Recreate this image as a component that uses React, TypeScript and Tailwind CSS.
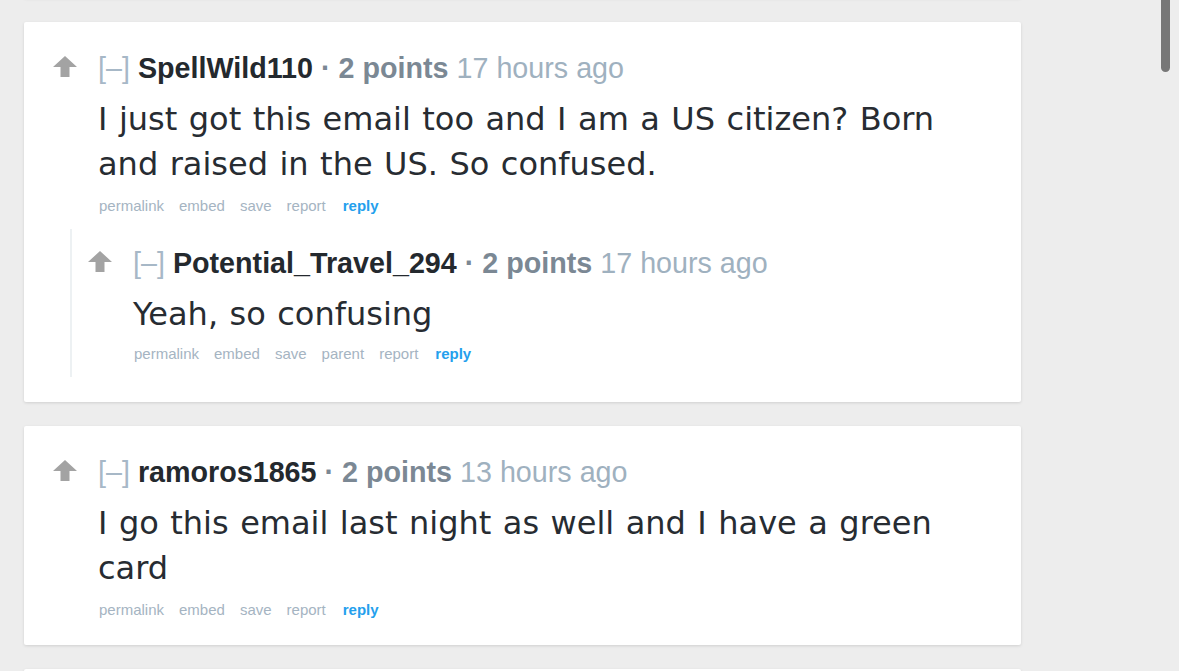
import React from "react"

interface CommentData {
  id: string
  author: string
  points: number
  time: string
  body: string
  actions: string[]
  children?: CommentData[]
}

const comments: CommentData[] = [
  {
    id: "c1",
    author: "SpellWild110",
    points: 2,
    time: "17 hours ago",
    body: "I just got this email too and I am a US citizen? Born and raised in the US. So confused.",
    actions: ["permalink", "embed", "save", "report"],
    children: [
      {
        id: "c1a",
        author: "Potential_Travel_294",
        points: 2,
        time: "17 hours ago",
        body: "Yeah, so confusing",
        actions: ["permalink", "embed", "save", "parent", "report"],
      },
    ],
  },
  {
    id: "c2",
    author: "ramoros1865",
    points: 2,
    time: "13 hours ago",
    body: "I go this email last night as well and I have a green card",
    actions: ["permalink", "embed", "save", "report"],
  },
]

function UpArrow() {
  return (
    <svg width="24" height="21" viewBox="0 0 24 21" className="shrink-0">
      <polygon points="12,0 24,11 16.5,11 16.5,21 7.5,21 7.5,11 0,11" fill="#a3a3a3" />
    </svg>
  )
}

function Comment({ c, nested = false }: { c: CommentData; nested?: boolean }) {
  return (
    <div className="flex">
      {/* vote column */}
      <div className="w-[45px] shrink-0 pt-[5px]">
        <UpArrow />
      </div>
      <div className="flex-1 min-w-0">
        {/* header */}
        <div className="h-[34px] leading-[34px] text-[28.7px] font-['Liberation_Sans',Arial,sans-serif] whitespace-nowrap">
          <span className="text-[#a7b8c7]">[–]</span>{" "}
          <span className="font-bold text-[#24292e]">{c.author}</span>{" "}
          <span className="font-bold text-[#7b8894]">· {c.points} points</span>{" "}
          <span className="text-[#9fb1bf]">{c.time}</span>
        </div>
        {/* body */}
        <p className="mt-[12px] text-[32px] leading-[45px] [word-spacing:1.3px] text-[#272c32] font-['DejaVu_Sans',Verdana,sans-serif] pr-[60px]">
          {c.body}
        </p>
        {/* actions */}
        <div className={`${nested ? "mt-[7px]" : "mt-[9px]"} flex gap-[15px] pl-[1px] text-[15px] leading-[20px] font-['Liberation_Sans',Arial,sans-serif]`}>
          {c.actions.map(a => (
            <span key={a} className="text-[#a5b4c2]">
              {a}
            </span>
          ))}
          <span className="font-bold text-[#24a0ed] ml-[2px]">reply</span>
        </div>
        {c.children && c.children.length > 0 && (
          <div className="mt-[13px] -ml-[28px]">
            {c.children.map(child => (
              <div key={child.id} className="border-l-2 border-[#edf1f3] pl-[16px] pt-[17px] pb-[13px]">
                <Comment c={child} nested />
              </div>
            ))}
          </div>
        )}
      </div>
    </div>
  )
}

export default function App() {
  return (
    <div className="relative min-h-screen w-full overflow-hidden bg-[#ededed]">
      <div className="-mt-[42px] flex flex-col gap-[24px] pl-[24px] pb-[20px]">
        {/* previous card, scrolled off */}
        <div className="h-[40px] w-[997px] rounded-[2px] bg-white shadow-[0_1px_3px_rgba(0,0,0,0.12)]" />

        {comments.map(c => (
          <div
            key={c.id}
            className={`w-[997px] rounded-[2px] bg-white pl-[29px] pt-[29px] ${c.children ? "pb-[25px]" : "pb-[25px]"} shadow-[0_1px_3px_rgba(0,0,0,0.12)]`}
          >
            <Comment c={c} />
          </div>
        ))}

        {/* next card */}
        <div className="h-[120px] w-[997px] rounded-[2px] bg-white shadow-[0_1px_3px_rgba(0,0,0,0.12)]" />
      </div>

      {/* overlay scrollbar */}
      <div className="absolute right-[9px] top-0 h-[72px] w-[9px] rounded-b-full bg-[#777777]" />
    </div>
  )
}
